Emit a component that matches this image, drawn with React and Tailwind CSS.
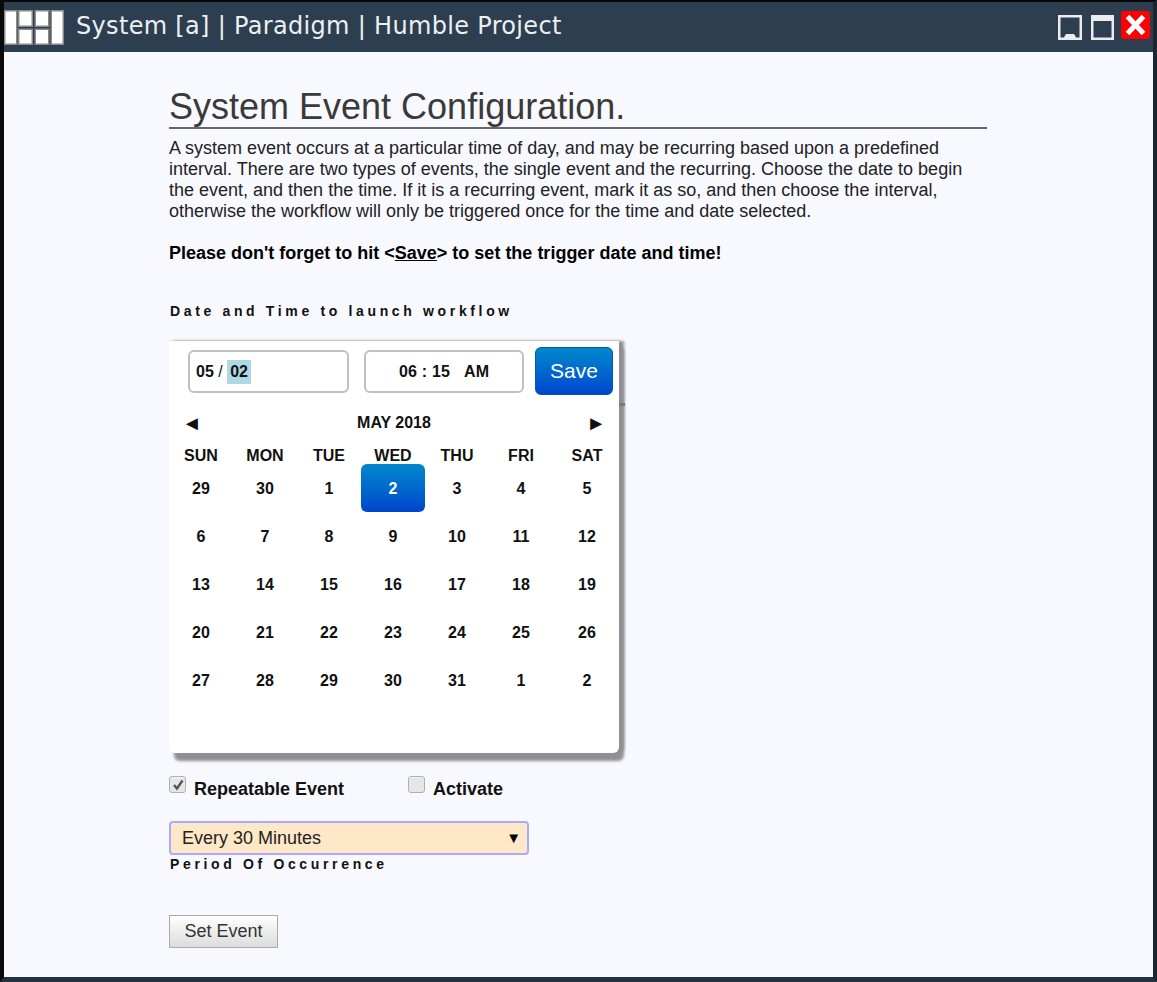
import React from 'react'

const days = ['SUN', 'MON', 'TUE', 'WED', 'THU', 'FRI', 'SAT']
const dates = [
  29, 30, 1, 2, 3, 4, 5,
  6, 7, 8, 9, 10, 11, 12,
  13, 14, 15, 16, 17, 18, 19,
  20, 21, 22, 23, 24, 25, 26,
  27, 28, 29, 30, 31, 1, 2,
]

function Logo() {
  const cells = [
    [0.75, 0.75, 12, 33.5],
    [14.75, 0.75, 13.5, 15.5],
    [31.25, 0.75, 13.5, 15.5],
    [14.75, 19.25, 13.5, 15],
    [31.25, 19.25, 13.5, 15],
    [47.25, 0.75, 12, 33.5],
  ]
  return (
    <svg width="60" height="35" viewBox="0 0 60 35" className="shrink-0">
      {cells.map(([x, y, w, h], i) => (
        <rect key={i} x={x} y={y} width={w} height={h} fill="#fff" stroke="#8a8a8a" strokeWidth="1.5" />
      ))}
    </svg>
  )
}

function WindowButtons() {
  return (
    <div className="flex items-start">
      <svg width="24" height="25" viewBox="0 0 24 25" className="mt-[5px] mr-[9px] opacity-90">
        <rect x="1.25" y="1.25" width="21.5" height="22.5" fill="none" stroke="#fff" strokeWidth="2.5" />
        <path d="M5 24 L8 19 H16 L19 24 Z" fill="#fff" />
      </svg>
      <svg width="23" height="25" viewBox="0 0 23 25" className="mt-[5px] mr-[7px] opacity-90">
        <rect x="1.25" y="1.25" width="20.5" height="22.5" fill="none" stroke="#fff" strokeWidth="2.5" />
        <rect x="2" y="2" width="19" height="4" fill="#fff" />
      </svg>
      <svg width="29" height="28" viewBox="0 0 29 28" className="mt-[1px]">
        <rect width="29" height="28" rx="3" fill="#ff0000" />
        <path d="M6.5 5.5 L22.5 22.5 M22.5 5.5 L6.5 22.5" stroke="#fff" strokeWidth="5" />
      </svg>
    </div>
  )
}

function Check({ checked }) {
  return (
    <div className="w-[17px] h-[17px] rounded-[3px] border border-[#b0b0b0] bg-[#e6e6e6] shadow-[inset_0_1px_1px_#f4f4f4] flex items-center justify-center">
      {checked && (
        <svg width="12" height="12" viewBox="0 0 12 12">
          <path d="M2 6 L5 9.5 L10.5 1.5" fill="none" stroke="#555" strokeWidth="2.4" />
        </svg>
      )}
    </div>
  )
}

function Calendar() {
  return (
    <div className="relative w-[450px] h-[412px] bg-white rounded-b-[6px] shadow-[5px_8px_3px_#8f8f94,5px_0_3px_#8f8f94,0_-1px_1px_#e4e4e8]">
      <div className="absolute left-[450px] top-[62px] w-[6px] h-[3px] bg-[#77777c]" />
      {/* inputs row */}
      <div className="flex items-start h-[64px]">
        <div className="ml-[19px] mt-[9px] w-[161px] h-[43px] border-2 border-[#c0c0c0] rounded-[6px] flex items-center pl-[6px] text-[16px] font-bold text-[#111]">
          05&nbsp;<span className="font-normal">/</span>&nbsp;<span className="bg-[#add8e6] px-[3px] leading-[24px]">02</span>
        </div>
        <div className="ml-[15px] mt-[9px] w-[160px] h-[43px] border-2 border-[#c0c0c0] rounded-[6px] flex items-center justify-center text-[16px] font-bold text-[#111] whitespace-pre [word-spacing:0.5px]">
          06 : 15   AM
        </div>
        <div className="ml-[11px] mt-[6px] w-[78px] h-[48px] rounded-[6px] border border-[#0058a8] bg-gradient-to-b from-[#0088cc] to-[#0044cc] text-white text-[21px] flex items-center justify-center">
          Save
        </div>
      </div>
      {/* month nav */}
      <div className="flex items-center justify-between h-[38px] pb-[2px] pl-[13px] pr-[13px] text-[16px] font-bold text-[#111]">
        <span className="text-[20px] leading-[20px]">◄</span>
        <span>MAY 2018</span>
        <span className="text-[20px] leading-[20px]">►</span>
      </div>
      <div className="grid w-[452px] grid-cols-[repeat(6,64px)_1fr] h-[26px] text-[16px] font-bold text-[#111] text-center leading-[26px]">
        {days.map((d) => (
          <div key={d}>{d}</div>
        ))}
      </div>
      <div className="grid w-[452px] grid-cols-[repeat(6,64px)_1fr] auto-rows-[48px] -mt-[5px] text-[16px] font-bold text-[#111]">
        {dates.map((d, i) =>
          i === 3 ? (
            <div key={i} className="flex items-center justify-center pt-[1px] rounded-[6px] bg-gradient-to-b from-[#0088cc] to-[#0044cc] text-white">
              {d}
            </div>
          ) : (
            <div key={i} className="flex items-center justify-center pt-[1px]">
              {d}
            </div>
          )
        )}
      </div>
    </div>
  )
}

export default function App() {
  return (
    <div className="w-[1157px] h-[982px] flex flex-col border-t-[2px] border-l-[4px] border-r-[4px] border-b-[5px] border-t-[#0a0a0a] border-l-[#0a0a0a] border-r-[#1a2530] border-b-[#22303f] bg-[#f8f9ff] font-['Liberation_Sans',sans-serif] overflow-hidden">
      {/* title bar */}
      <div className="h-[50px] shrink-0 bg-[#2c3e50] flex items-start justify-between pt-[8px] pr-[3px]">
        <div className="flex items-start">
          <Logo />
          <span className="ml-[12px] text-[24px] leading-[32px] tracking-[0.32px] text-[#ecf0f1] font-['DejaVu_Sans',sans-serif]">
            System [a] | Paradigm | Humble Project
          </span>
        </div>
        <WindowButtons />
      </div>

      <main className="pl-[165px] pt-[34px]">
        <div className="w-[818px]">
          <h1 className="text-[36px] leading-[42px] text-[#3a3a3a] border-b-2 border-[#666] h-[43px]">
            System Event Configuration.
          </h1>
          <p className="mt-[9px] text-[18px] leading-[21px] text-[#222]">
            A system event occurs at a particular time of day, and may be recurring based upon a predefined interval. There are two types of events, the single event and the recurring. Choose the date to begin the event, and then the time. If it is a recurring event, mark it as so, and then choose the interval, otherwise the workflow will only be triggered once for the time and date selected.
          </p>
          <p className="mt-[21px] text-[18px] leading-[21px] font-bold text-black">
            Please don't forget to hit &lt;<u>Save</u>&gt; to set the trigger date and time!
          </p>
        </div>

        <div className="mt-[39px] ml-[1px] text-[14px] leading-[16px] font-bold tracking-[3.65px] text-[#111]">
          Date and Time to launch workflow
        </div>

        <div className="mt-[22px]">
          <Calendar />
        </div>

        <div className="flex items-start h-[24px] mt-[23px] text-[18px] font-bold text-[#111]">
          <Check checked />
          <span className="ml-[8px] mt-[1px] w-[214px] leading-[24px]">Repeatable Event</span>
          <Check />
          <span className="ml-[8px] mt-[1px] leading-[24px]">Activate</span>
        </div>

        <div className="mt-[21px] w-[360px] h-[34px] border-2 border-[#aaaaff] rounded-[4px] bg-[#ffe8c8] flex items-center justify-between pl-[11px] pr-[6px] text-[18px] text-[#222]">
          <span>Every 30 Minutes</span>
          <span className="text-[15px] text-black">▼</span>
        </div>

        <div className="mt-[1px] ml-[1px] text-[14px] leading-[16px] font-bold tracking-[3.65px] text-[#111]">
          Period Of Occurrence
        </div>

        <button className="block mt-[43px] w-[109px] h-[33px] border border-[#aaa] bg-gradient-to-b from-white to-[#dcdcdc] text-[18px] text-[#333]">
          Set Event
        </button>
      </main>
    </div>
  )
}
